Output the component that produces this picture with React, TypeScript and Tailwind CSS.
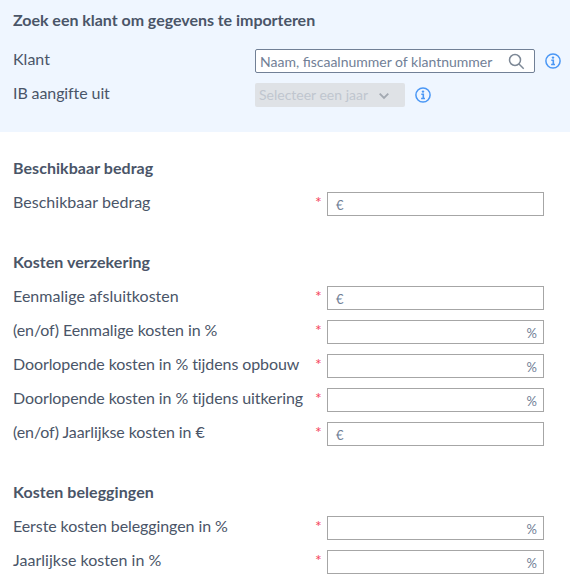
import React from "react";

type Field = { label: string; unit: "€" | "%"; tight?: boolean };

function InfoIcon() {
  return (
    <svg width="16" height="16" viewBox="0 0 16 16" className="shrink-0">
      <circle cx="8" cy="8" r="7.1" fill="none" stroke="#4a97f5" strokeWidth="1.5" />
      <circle cx="8" cy="4.6" r="1.2" fill="#4a97f5" />
      <path d="M6.3 7.2H8.3V11.4M6.1 11.5H10" fill="none" stroke="#4a97f5" strokeWidth="1.6" />
    </svg>
  );
}

function Row({ label, unit, tight }: Field) {
  return (
    <div className="flex h-[34px] items-start">
      <div className={`w-[302px] whitespace-nowrap ${tight ? "tracking-[-0.09px]" : "tracking-[0.03px]"}`}>
        {label}
      </div>
      <div className="w-[12px] text-[16px] text-[#f5455c]">*</div>
      <div
        className={`flex h-6 w-[217px] items-center border border-[#a6a6a6] bg-white pr-[6px] pl-[8px] pt-px text-[13px] text-[#718096] ${
          unit === "%" ? "justify-end" : "justify-start"
        }`}
      >
        {unit}
      </div>
    </div>
  );
}

function Section({ title, fields }: { title: string; fields: Field[] }) {
  return (
    <section className="mb-[26px]">
      <h2 className="h-[34px] font-bold tracking-[0.05px]">{title}</h2>
      {fields.map((f) => (
        <Row key={f.label} {...f} />
      ))}
    </section>
  );
}

export default function App() {
  return (
    <div className="h-[579px] w-[570px] overflow-hidden bg-white font-['Lato',sans-serif] text-[16px] leading-[20px] text-[#4a5568] [font-variant-ligatures:none]">
      <header className="h-[132px] bg-[#eff6ff] pt-[10px] pl-[13px]">
        <h2 className="h-[39px] font-bold tracking-[-0.03px]">Zoek een klant om gegevens te importeren</h2>
        <div className="flex h-[34px] items-start">
          <div className="w-[242px]">Klant</div>
          <div className="flex h-6 w-[280px] items-center justify-between rounded-[2px] border border-[#718096] bg-white pt-px pr-[9px] pl-1 text-[14px] text-[#718096]">
            <span className="whitespace-nowrap [font-variant-ligatures:normal]">Naam, fiscaalnummer of klantnummer</span>
            <svg width="17" height="17" viewBox="0 0 17 17" fill="none" stroke="#7d8896" strokeWidth="1.5" className="-mt-px">
              <circle cx="7" cy="7" r="5.5" />
              <path d="M11 11l4.7 4.7" />
            </svg>
          </div>
          <div className="mt-[4px] ml-[10px]"><InfoIcon /></div>
        </div>
        <div className="flex items-start">
          <div className="w-[242px] tracking-[-0.1px]">IB aangifte uit</div>
          <div className="flex h-6 w-[150px] items-center justify-between rounded-[2px] bg-[#dfe2e6] pr-[15px] pl-1 text-[14px] text-[#c0c6cf]">
            <span>Selecteer een jaar</span>
            <svg width="12" height="8" viewBox="0 0 12 8" fill="none" stroke="#a2a8b0" strokeWidth="1.8" className="mt-px">
              <path d="M1.7 1.7L6 6l4.3-4.3" />
            </svg>
          </div>
          <div className="mt-[4px] ml-[10px]"><InfoIcon /></div>
        </div>
      </header>
      <main className="pt-[26px] pl-[13px]">
        <Section title="Beschikbaar bedrag" fields={[{ label: "Beschikbaar bedrag", unit: "€" }]} />
        <Section
          title="Kosten verzekering"
          fields={[
            { label: "Eenmalige afsluitkosten", unit: "€" },
            { label: "(en/of) Eenmalige kosten in %", unit: "%", tight: true },
            { label: "Doorlopende kosten in % tijdens opbouw", unit: "%", tight: true },
            { label: "Doorlopende kosten in % tijdens uitkering", unit: "%", tight: true },
            { label: "(en/of) Jaarlijkse kosten in €", unit: "€", tight: true },
          ]}
        />
        <Section
          title="Kosten beleggingen"
          fields={[
            { label: "Eerste kosten beleggingen in %", unit: "%", tight: true },
            { label: "Jaarlijkse kosten in %", unit: "%" },
          ]}
        />
      </main>
    </div>
  );
}
